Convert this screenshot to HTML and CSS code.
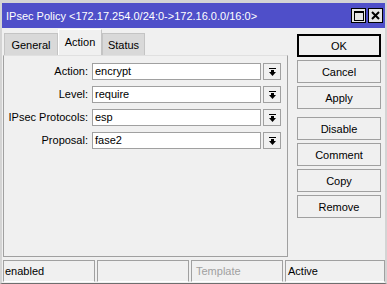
FILE: index.html
```html
<!DOCTYPE html>
<html lang="en">
<head>
    <meta charset="UTF-8">
    <title>IPsec Policy</title>
    <link rel="stylesheet" href="styles.css">
</head>
<body>
    <div class="window">
        <div class="titlebar">
            <span class="title">IPsec Policy &lt;172.17.254.0/24:0-&gt;172.16.0.0/16:0&gt;</span>
            <div class="title-buttons">
                <span class="tbtn">
                    <svg width="10" height="10" viewBox="0 0 10 10"><rect x="0.5" y="0.5" width="9" height="9" fill="none" stroke="#000"/><rect x="0" y="0" width="10" height="2" fill="#000"/></svg>
                </span>
                <span class="tbtn">
                    <svg width="9" height="9" viewBox="0 0 9 9"><path d="M1 1 L8 8 M8 1 L1 8" stroke="#000" stroke-width="2"/></svg>
                </span>
            </div>
        </div>

        <div class="main">
            <div class="left">
                <div class="tabs">
                    <div class="tab general">General</div>
                    <div class="tab active">Action</div>
                    <div class="tab status">Status</div>
                </div>
                <div class="panel">
                    <div class="row">
                        <label>Action:</label>
                        <div class="field">encrypt</div>
                        <div class="drop"><svg width="7" height="8" viewBox="0 0 7 8"><rect x="0" y="0" width="7" height="1" fill="#000"/><rect x="2" y="2" width="3" height="2" fill="#000"/><path d="M0 4 H7 L3.5 8 Z" fill="#000"/></svg></div>
                    </div>
                    <div class="row">
                        <label>Level:</label>
                        <div class="field">require</div>
                        <div class="drop"><svg width="7" height="8" viewBox="0 0 7 8"><rect x="0" y="0" width="7" height="1" fill="#000"/><rect x="2" y="2" width="3" height="2" fill="#000"/><path d="M0 4 H7 L3.5 8 Z" fill="#000"/></svg></div>
                    </div>
                    <div class="row">
                        <label>IPsec Protocols:</label>
                        <div class="field">esp</div>
                        <div class="drop"><svg width="7" height="8" viewBox="0 0 7 8"><rect x="0" y="0" width="7" height="1" fill="#000"/><rect x="2" y="2" width="3" height="2" fill="#000"/><path d="M0 4 H7 L3.5 8 Z" fill="#000"/></svg></div>
                    </div>
                    <div class="row">
                        <label>Proposal:</label>
                        <div class="field">fase2</div>
                        <div class="drop"><svg width="7" height="8" viewBox="0 0 7 8"><rect x="0" y="0" width="7" height="1" fill="#000"/><rect x="2" y="2" width="3" height="2" fill="#000"/><path d="M0 4 H7 L3.5 8 Z" fill="#000"/></svg></div>
                    </div>
                </div>
            </div>

            <div class="actions">
                <button class="btn default">OK</button>
                <button class="btn">Cancel</button>
                <button class="btn">Apply</button>
                <button class="btn spaced">Disable</button>
                <button class="btn">Comment</button>
                <button class="btn">Copy</button>
                <button class="btn">Remove</button>
            </div>
        </div>

        <div class="statusbar">
            <div class="cell">enabled</div>
            <div class="cell"></div>
            <div class="cell muted">Template</div>
            <div class="cell wide">Active</div>
        </div>
    </div>
</body>
</html>
```

FILE: styles.css
```css
* {
    margin: 0;
    padding: 0;
    box-sizing: border-box;
    font-family: "Liberation Sans", Arial, sans-serif;
    font-size: 11px;
}

body {
    width: 387px;
    height: 284px;
    background-color: #c8c8c8;
    overflow: hidden;
}

.window {
    width: 387px;
    height: 284px;
    display: flex;
    flex-direction: column;
    background-color: #f0f0f0;
    border-top: 3px solid #d4d4d4;
    border-left: 2px solid #d4d4d4;
    border-right: 2px solid #d4d4d4;
    border-bottom: 1px solid #6e6e6e;
}

.titlebar {
    height: 25px;
    background-color: #4f4fc9;
    display: flex;
    align-items: center;
    justify-content: space-between;
    padding: 0 2px 0 4px;
}

.title {
    color: #fff;
    font-size: 11px;
}

.title-buttons {
    display: flex;
    gap: 2px;
}

.tbtn {
    width: 15px;
    height: 15px;
    background-color: #e6e6e6;
    border: 1px solid #000;
    display: flex;
    align-items: center;
    justify-content: center;
}

.main {
    flex: 1;
    display: flex;
}

.left {
    width: 286px;
    display: flex;
    flex-direction: column;
    padding-left: 1px;
}

.tabs {
    display: flex;
    align-items: flex-end;
    height: 27px;
    padding-left: 1px;
}

.tab {
    height: 22px;
    line-height: 22px;
    text-align: center;
    background-color: #d9d9d9;
    border: 1px solid #c4c4c4;
    border-bottom: none;
    color: #000;
}

.tab.general {
    width: 54px;
}

.tab.status {
    width: 43px;
}

.tab.active {
    width: 44px;
    height: 26px;
    line-height: 24px;
    background-color: #f0f0f0;
    border: 1px solid #fff;
    border-bottom: none;
    border-right: 1px solid #c4c4c4;
}

.panel {
    height: 202px;
    border: 1px solid #a0a0a0;
    border-top-color: #e0e0e0;
    padding-top: 7px;
    display: flex;
    flex-direction: column;
    gap: 6px;
}

.row {
    display: flex;
    height: 17px;
    align-items: stretch;
}

.row label {
    width: 84px;
    margin-right: 4px;
    text-align: right;
    line-height: 17px;
    color: #000;
}

.field {
    width: 169px;
    background-color: #fff;
    border: 1px solid #a0a0a0;
    line-height: 15px;
    padding-left: 2px;
    color: #000;
}

.drop {
    width: 18px;
    margin-left: 2px;
    border: 1px solid #a0a0a0;
    display: flex;
    align-items: center;
    justify-content: center;
    background-color: #f0f0f0;
}

.actions {
    display: flex;
    flex-direction: column;
    gap: 3px;
    padding: 6px 0 0 9px;
}

.btn {
    width: 84px;
    height: 23px;
    background-color: #f0f0f0;
    border: 1px solid #a0a0a0;
    color: #000;
    font-size: 11px;
}

.btn.default {
    border: 2px solid #000;
}

.btn.spaced {
    margin-top: 5px;
}

.statusbar {
    display: flex;
    gap: 2px;
    padding: 2px 0 0 1px;
    height: 25px;
}

.cell {
    width: 92px;
    height: 22px;
    border: 1px solid #a0a0a0;
    border-bottom-color: #fff;
    line-height: 20px;
    padding-left: 1px;
    color: #000;
}

.cell.muted {
    color: #a0a0a0;
    padding-left: 4px;
}

.cell.wide {
    flex: 1;
    padding-left: 2px;
}
```
